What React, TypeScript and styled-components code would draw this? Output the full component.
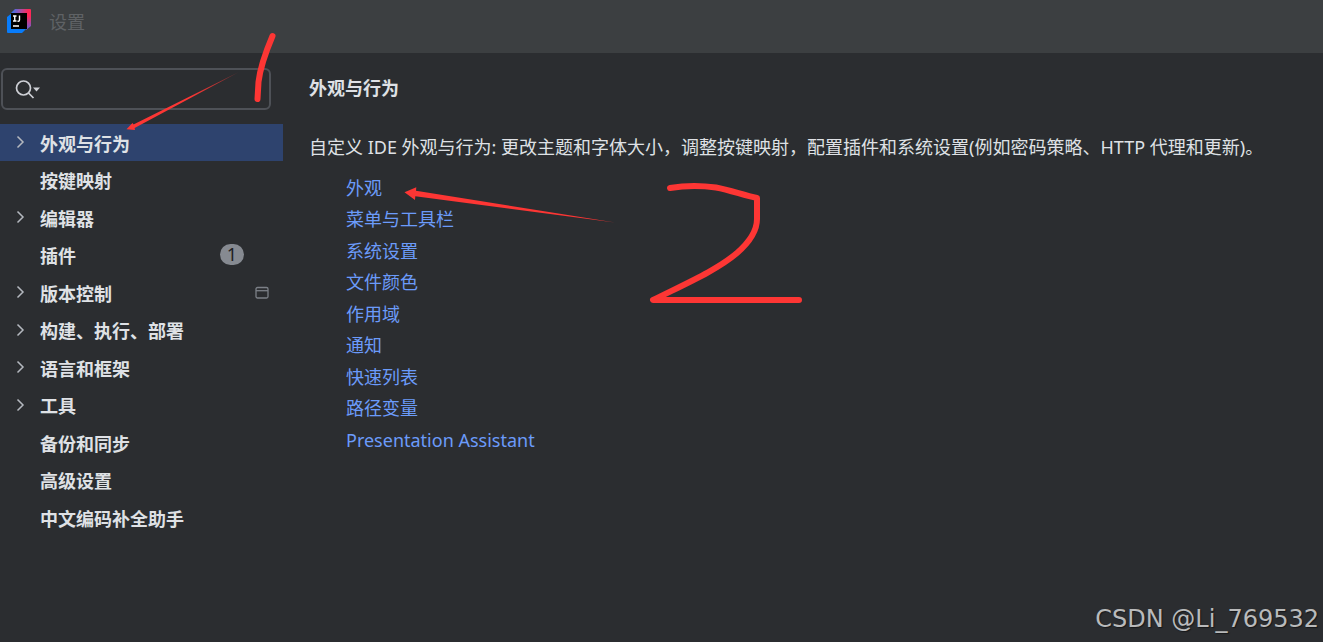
import React from "react";
import styled, { createGlobalStyle } from "styled-components";

const GlobalStyle = createGlobalStyle`
  * { box-sizing: border-box; }
  body {
    margin: 0;
    background: #2b2d30;
    color: #dfe1e5;
    font-family: "Noto Sans", "Noto Sans CJK SC", sans-serif;
    font-size: 18px;
    line-height: 24px;
  }
`;

const Window = styled.div`
  position: relative;
  display: flex;
  flex-direction: column;
  min-height: 100vh;
  overflow: hidden;
`;

const TitleBar = styled.header`
  display: flex;
  align-items: center;
  gap: 18px;
  height: 53px;
  padding: 0 7px 10px;
  background: #3c3f41;
  color: #5f6265;
`;

const Body = styled.div`
  display: flex;
  flex: 1;
`;

const Sidebar = styled.aside`
  flex: 0 0 283px;
  min-width: 0;
  padding-top: 15px;
`;

const SearchBox = styled.label`
  display: flex;
  align-items: center;
  gap: 4px;
  height: 42px;
  margin: 0 12px 14px 1px;
  padding: 0 12px;
  border: 2px solid #4e5157;
  border-radius: 6px;
`;

const SearchInput = styled.input`
  flex: 1;
  width: 100%;
  min-width: 0;
  border: 0;
  outline: 0;
  background: transparent;
  color: inherit;
  font: inherit;
`;

const Tree = styled.ul`
  margin: 0;
  padding: 0;
  list-style: none;
`;

const TreeItem = styled.li`
  height: 37px;
  &:nth-child(even) { height: 38px; }
`;

const TreeButton = styled.button<{ $selected?: boolean }>`
  display: flex;
  align-items: center;
  width: 100%;
  height: 100%;
  padding: 2px 14px 0 15px;
  border: 0;
  background: ${(p) => (p.$selected ? "#2e436e" : "transparent")};
  color: inherit;
  font: inherit;
  font-weight: 700;
  text-align: left;
`;

const ArrowSlot = styled.span`
  display: flex;
  flex: 0 0 25px;
  padding-bottom: 3px;
`;

const ItemLabel = styled.span`
  flex: 1;
`;

const Badge = styled.span`
  width: 24px;
  height: 21px;
  margin: 0 25px 3px 0;
  border-radius: 11px;
  background: #868a91;
  color: #1e1f22;
  font-weight: 400;
  line-height: 21px;
  text-align: center;
`;

const Content = styled.main`
  flex: 1;
  min-width: 0;
  padding: 23px 26px;
`;

const Heading = styled.h1`
  margin: 0 0 35px;
  font-size: 18px;
  line-height: 24px;
`;

const Description = styled.p`
  margin: 0 0 14px;
`;

const LinkList = styled.ul`
  margin: 0;
  padding: 0 0 0 37px;
  list-style: none;
`;

const LinkItem = styled.li`
  height: 31px;
  line-height: 31px;
  &:nth-child(even) { height: 32px; }
`;

const SettingsLink = styled.a`
  color: #6b9bfa;
  text-decoration: none;
`;

const Marks = styled.svg`
  position: absolute;
  top: 0;
  left: 0;
  pointer-events: none;
`;

const Watermark = styled.div`
  position: absolute;
  right: 4px;
  bottom: 8px;
  color: #b9babb;
  font-family: "DejaVu Sans", sans-serif;
  font-size: 24px;
  line-height: 30px;
  text-shadow: 1px 1px 1px #17181a;
`;

const Logo = () => (
  <svg width="24" height="25" viewBox="0 0 24 25" aria-hidden="true">
    <defs>
      <linearGradient id="logoWarm" gradientUnits="userSpaceOnUse" x1="5" y1="5" x2="24" y2="8">
        <stop offset="0" stopColor="#3d6fe8" />
        <stop offset="0.45" stopColor="#b04a9e" />
        <stop offset="0.8" stopColor="#fe2857" />
      </linearGradient>
      <linearGradient id="logoSide" gradientUnits="userSpaceOnUse" x1="0" y1="7" x2="0" y2="21">
        <stop offset="0" stopColor="#fe2857" />
        <stop offset="1" stopColor="#5c62dd" />
      </linearGradient>
    </defs>
    <path d="M8 0H23Q24 0 24 1V8H4V4Z" fill="url(#logoWarm)" />
    <path d="M19 7H24V17L19 21Z" fill="url(#logoSide)" />
    <path d="M0 8L5 4V19H20L15 24H1Q0 24 0 23Z" fill="#087cfa" />
    <path d="M4 4H20V20H4Z" fill="#000" />
    <path d="M6 7H9.5M7.75 7V12M6 12H9.5M12.5 6.500V11Q12.5 12.2 11.3 12.2H10.5M6 17H12" fill="none" stroke="#fff" strokeWidth="1.4" />
  </svg>
);

const SearchIcon = () => (
  <svg width="26" height="20" viewBox="0 0 26 20" aria-hidden="true">
    <circle cx="8.5" cy="9" r="7" fill="none" stroke="#ced0d6" strokeWidth="1.7" />
    <path d="M13.5 14L18.5 19" stroke="#ced0d6" strokeWidth="1.7" />
    <path d="M18 8.500H25L21.5 12.500Z" fill="#ced0d6" />
  </svg>
);

const Chevron = () => (
  <svg width="12" height="14" viewBox="0 0 12 14" aria-hidden="true">
    <path d="M2.5 1.5L8 7L2.5 12.5" fill="none" stroke="#b4b8bf" strokeWidth="1.5" />
  </svg>
);

const ProjectIcon = () => (
  <svg width="14" height="16" viewBox="0 0 14 16" aria-hidden="true">
    <rect x="1" y="1.5" width="12" height="10.5" rx="1.5" fill="none" stroke="#7c8087" strokeWidth="1.3" />
    <path d="M1 4.7H13" stroke="#7c8087" strokeWidth="1.3" />
  </svg>
);

type Entry = { label: string; expandable?: boolean; badge?: number; project?: boolean };

const entries: Entry[] = [
  { label: "外观与行为", expandable: true },
  { label: "按键映射" },
  { label: "编辑器", expandable: true },
  { label: "插件", badge: 1 },
  { label: "版本控制", expandable: true, project: true },
  { label: "构建、执行、部署", expandable: true },
  { label: "语言和框架", expandable: true },
  { label: "工具", expandable: true },
  { label: "备份和同步" },
  { label: "高级设置" },
  { label: "中文编码补全助手" },
];

const links = [
  "外观",
  "菜单与工具栏",
  "系统设置",
  "文件颜色",
  "作用域",
  "通知",
  "快速列表",
  "路径变量",
  "Presentation Assistant",
];

const HandMarks = () => (
  <Marks width="820" height="320" viewBox="0 0 820 320" aria-hidden="true">
    <defs>
      <linearGradient id="fadeOne" gradientUnits="userSpaceOnUse" x1="238" y1="73" x2="190" y2="97">
        <stop offset="0" stopColor="#fd3634" stopOpacity="0.5" />
        <stop offset="1" stopColor="#fd3634" />
      </linearGradient>
    </defs>
    <path d="M238 72.500L133.500 124.500L132.500 123L126.500 129.300L135 130L134.600 127.900Z" fill="url(#fadeOne)" />
    <path d="M615 222.5L416 190.7L416.3 187.3L404.5 192.3L415 200L415.3 196.2Z" fill="#fd3634" />
    <g fill="none" stroke="#fd3634" strokeWidth="6" strokeLinecap="round" strokeLinejoin="round">
      <path d="M272.5 36C264 56 260 69 258.500 82L257.500 99" />
      <path d="M670 188C688 185 705 186 716 187.500C730 190 743 195 757 198V219C757 233 745 246 737 253C717 270 687 283 653 300H799" />
    </g>
  </Marks>
);

export default function App() {
  return (
    <>
      <GlobalStyle />
      <Window>
        <TitleBar>
          <Logo />
          <span>设置</span>
        </TitleBar>
        <Body>
          <Sidebar>
            <SearchBox>
              <SearchIcon />
              <SearchInput type="text" aria-label="搜索" />
            </SearchBox>
            <Tree>
              {entries.map((entry, index) => (
                <TreeItem key={entry.label}>
                  <TreeButton type="button" $selected={index === 0}>
                    <ArrowSlot>{entry.expandable && <Chevron />}</ArrowSlot>
                    <ItemLabel>{entry.label}</ItemLabel>
                    {entry.badge && <Badge>{entry.badge}</Badge>}
                    {entry.project && <ProjectIcon />}
                  </TreeButton>
                </TreeItem>
              ))}
            </Tree>
          </Sidebar>
          <Content>
            <Heading>外观与行为</Heading>
            <Description>
              自定义 IDE 外观与行为: 更改主题和字体大小，调整按键映射，配置插件和系统设置(例如密码策略、HTTP 代理和更新)。
            </Description>
            <LinkList>
              {links.map((link) => (
                <LinkItem key={link}>
                  <SettingsLink href="#">{link}</SettingsLink>
                </LinkItem>
              ))}
            </LinkList>
          </Content>
        </Body>
        <HandMarks />
        <Watermark>CSDN @Li_769532</Watermark>
      </Window>
    </>
  );
}
